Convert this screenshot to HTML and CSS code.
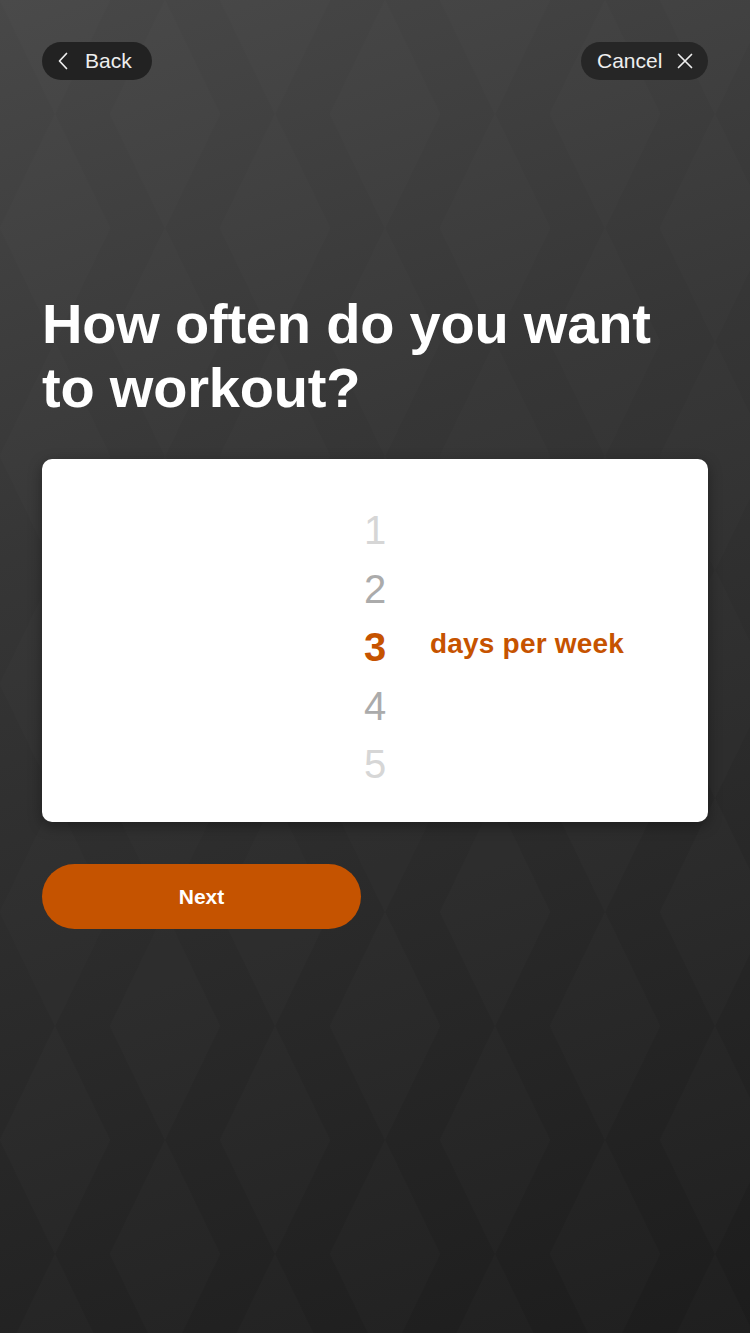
FILE: index.html
```html
<!DOCTYPE html>
<html lang="en">
<head>
<meta charset="utf-8">
<title>Workout frequency</title>
<link rel="stylesheet" href="styles.css">
</head>
<body>
<main class="screen">
  <header class="topbar">
    <button class="pill pill-back" type="button">
      <svg class="pill-icon" viewBox="0 0 12 18" width="12" height="18" aria-hidden="true">
        <path d="M9.5 1.5 L2.5 9 L9.5 16.5" fill="none" stroke="currentColor" stroke-width="1.7" stroke-linecap="round" stroke-linejoin="round"/>
      </svg>
      <span>Back</span>
    </button>
    <button class="pill pill-cancel" type="button">
      <span>Cancel</span>
      <svg class="pill-icon" viewBox="0 0 16 16" width="16" height="16" aria-hidden="true">
        <path d="M1.5 1.5 L14.5 14.5 M14.5 1.5 L1.5 14.5" fill="none" stroke="currentColor" stroke-width="1.7" stroke-linecap="round"/>
      </svg>
    </button>
  </header>

  <h1 class="question">How often do you want to workout?</h1>

  <section class="picker-card">
    <ul class="wheel">
      <li class="wheel-item far">1</li>
      <li class="wheel-item near">2</li>
      <li class="wheel-item selected">3</li>
      <li class="wheel-item near">4</li>
      <li class="wheel-item far">5</li>
    </ul>
    <div class="unit">days per week</div>
  </section>

  <button class="next" type="button">Next</button>
</main>
</body>
</html>
```

FILE: styles.css
```css
* { box-sizing: border-box; }

html, body {
  margin: 0;
  padding: 0;
  height: 100%;
}

body {
  font-family: "Liberation Sans", Arial, sans-serif;
  color: #fff;
  background-color: #2c2c2c;
  background-image:
    url("data:image/svg+xml;utf8,<svg xmlns='http://www.w3.org/2000/svg' width='220' height='228'><g fill='%23ffffff' fill-opacity='0.012'><polygon points='0,0 55,114 110,0'/><polygon points='110,114 165,0 220,114'/><polygon points='0,228 55,114 110,228'/><polygon points='165,228 110,114 220,114'/></g></svg>"),
    linear-gradient(160deg, #484848 0%, #363636 35%, #2a2a2a 65%, #1c1c1c 100%);
  background-size: 220px 228px, 100% 100%;
  min-height: 1333px;
}

.screen {
  padding: 42px 42px 0 42px;
  display: flex;
  flex-direction: column;
}

.topbar {
  display: flex;
  justify-content: space-between;
  align-items: center;
}

.pill {
  display: inline-flex;
  align-items: center;
  height: 38px;
  border: none;
  border-radius: 19px;
  background: #222222;
  color: #eeeeee;
  font-family: "Liberation Sans", Arial, sans-serif;
  font-size: 21px;
  cursor: pointer;
}

.pill-back {
  padding: 0 17px 0 15px;
  gap: 16px;
  width: 110px;
}

.pill-cancel {
  padding: 0 14px 0 16px;
  gap: 15px;
  width: 127px;
  background: #262626;
}

.pill-icon { flex: none; }

.question {
  margin: 212px 0 0 0;
  font-size: 56px;
  font-weight: 700;
  line-height: 64px;
  letter-spacing: -0.2px;
  max-width: 650px;
}

.picker-card {
  margin-top: 39px;
  height: 363px;
  background: #ffffff;
  border-radius: 10px;
  box-shadow: 0 4px 14px rgba(0, 0, 0, 0.35);
  display: grid;
  grid-template-columns: 1fr 40px 1fr;
  align-items: start;
  padding-top: 42px;
}

.wheel {
  grid-column: 2;
  list-style: none;
  margin: 0;
  padding: 0;
  text-align: center;
}

.wheel-item {
  height: 58.5px;
  line-height: 58.5px;
  font-size: 40px;
}

.wheel-item.far { color: #d6d6d6; }
.wheel-item.near { color: #ababab; }
.wheel-item.selected {
  color: #c65300;
  font-weight: 700;
}

.unit {
  grid-column: 3;
  margin-top: 114px;
  height: 58.5px;
  line-height: 58.5px;
  padding-left: 35px;
  color: #c65300;
  font-size: 28px;
  font-weight: 700;
  letter-spacing: 0.2px;
  white-space: nowrap;
}

.next {
  margin-top: 42px;
  width: 319px;
  height: 65px;
  border: none;
  border-radius: 33px;
  background: #c55300;
  color: #ffffff;
  font-family: "Liberation Sans", Arial, sans-serif;
  font-size: 21px;
  font-weight: 700;
  cursor: pointer;
}
```
